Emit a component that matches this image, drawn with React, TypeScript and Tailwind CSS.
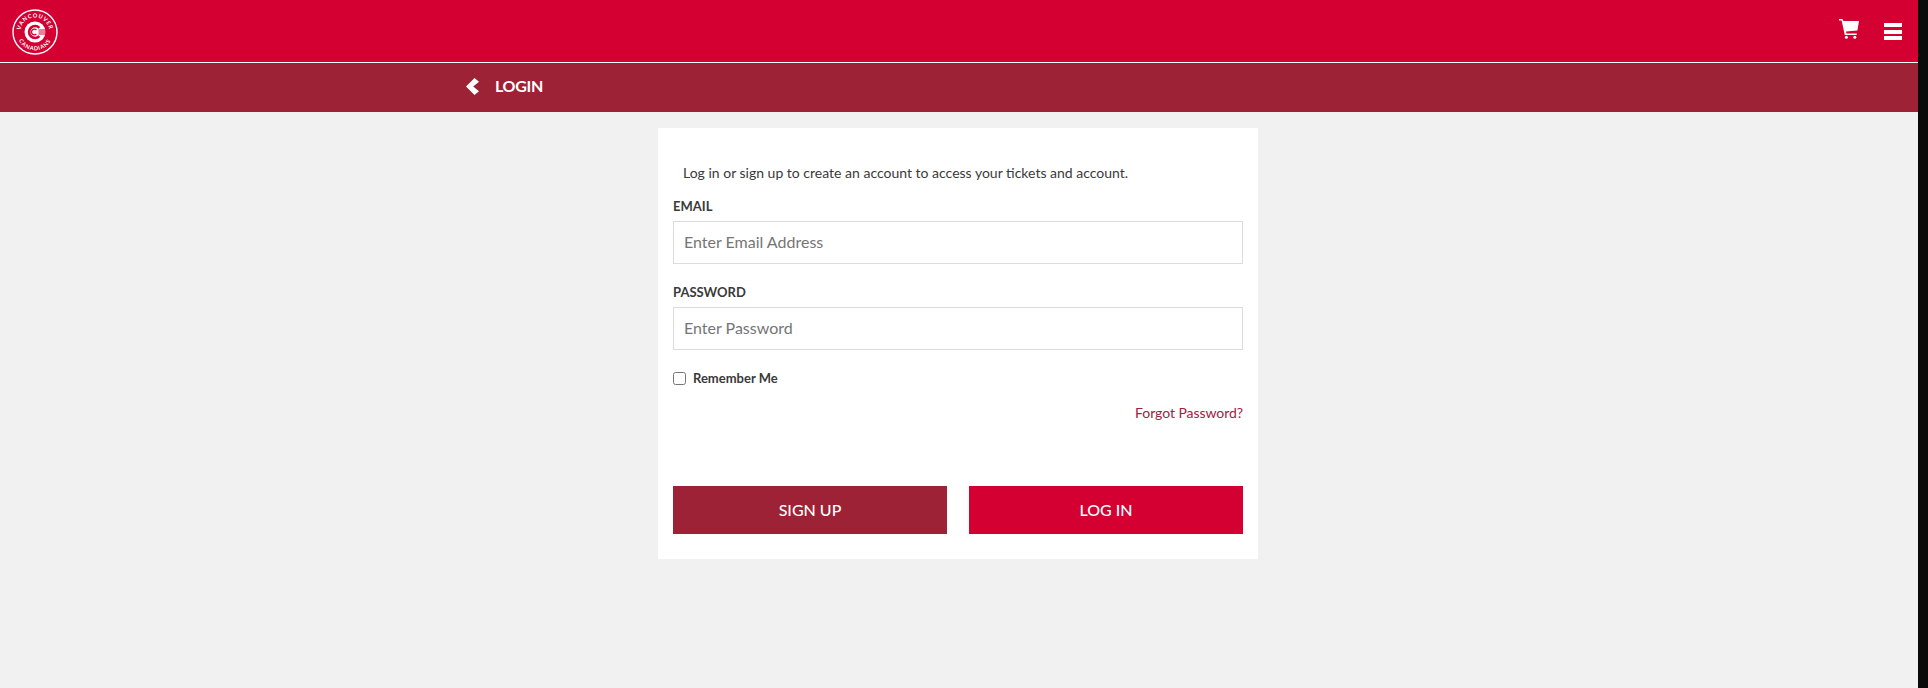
import { useState } from "react"

function Logo() {
    return (
        <svg viewBox="0 0 46 46" className="h-[46px] w-[46px]">
            <circle cx="23" cy="23" r="22" fill="none" stroke="#fff" strokeWidth="1.4" />
            <circle cx="23" cy="23" r="10.5" fill="#fff" />
            <path d="M27.4 18.8a6 6 0 1 0 0 8.4" fill="none" stroke="#d50032" strokeWidth="2.6" />
            <path d="M24.4 21.2a2.8 2.8 0 1 0 0 3.6" fill="none" stroke="#d50032" strokeWidth="1.3" />
            <path d="M26.5 21h7M26.5 23h8M26.5 25h7" stroke="#d50032" strokeWidth="1" />
            <defs>
                <path id="logo-top" d="M8.5 23a14.5 14.5 0 0 1 29 0" />
                <path id="logo-bottom" d="M5.2 26a18 18 0 0 0 35.6 0" />
            </defs>
            <text fill="#fff" fontSize="5.6" fontWeight="700" fontFamily="Lato, sans-serif" letterSpacing="0.7">
                <textPath href="#logo-top" startOffset="50%" textAnchor="middle">VANCOUVER</textPath>
            </text>
            <text fill="#fff" fontSize="5.6" fontWeight="700" fontFamily="Lato, sans-serif" letterSpacing="0.7">
                <textPath href="#logo-bottom" startOffset="50%" textAnchor="middle">CANADIANS</textPath>
            </text>
        </svg>
    )
}

function CartIcon() {
    return (
        <svg viewBox="0 0 20 20" className="h-[20px] w-[20px]" fill="#fff">
            <path d="M0 0h3.4l1 2H20l-1.6 9.4-11.4 1 .4 2h10.4V16H5.8L2.6 1.6H0z" />
            <circle cx="7.4" cy="18.3" r="1.5" />
            <circle cx="15.8" cy="18.3" r="1.5" />
        </svg>
    )
}

function BackIcon() {
    return (
        <svg viewBox="0 0 13 17" className="h-[17px] w-[13px]" fill="#fff">
            <path d="M8.5 0L13 3.8 7.2 8.5 13 13.2 8.5 17 0 8.5z" />
        </svg>
    )
}

export default function App() {
    const [remember, setRemember] = useState(false)

    return (
        <div className="flex h-[688px] overflow-hidden bg-[#0a0a0a] font-['Lato',sans-serif]">
            <div className="w-[1918px] shrink-0 bg-[#f1f1f1]">
                <header className="flex h-[63px] items-start justify-between border-b border-white bg-[#d50032] pl-[12px] pr-[16px]">
                    <div className="pt-[9px]">
                        <Logo />
                    </div>
                    <div className="flex items-start gap-[25px] pt-[19px]">
                        <CartIcon />
                        <div className="mt-[4px] flex w-[18px] flex-col gap-[2.5px]">
                            <span className="h-[4px] bg-white" />
                            <span className="h-[4px] bg-white" />
                            <span className="h-[4px] bg-white" />
                        </div>
                    </div>
                </header>

                <div className="h-[49px] bg-[#9d2235]">
                    <div className="flex h-full items-center pb-[3px] pl-[466px]">
                        <BackIcon />
                        <span className="ml-[16px] text-[16px] font-bold tracking-[-0.3px] text-white">LOGIN</span>
                    </div>
                </div>

                <main className="ml-[658px] mt-[16px] h-[431px] w-[600px] bg-white px-[15px] pt-[35px]">
                    <p className="pl-[10px] text-[14px] leading-[20px] text-[#3a3a3a]">
                        Log in or sign up to create an account to access your tickets and account.
                    </p>

                    <label className="mt-[13px] block text-[13px] font-bold leading-[20px] text-[#3a3a3a]">EMAIL</label>
                    <input
                        type="text"
                        placeholder="Enter Email Address"
                        className="mt-[5px] block h-[43px] w-full border border-[#dcdcdc] px-[10px] pb-[2px] text-[16px] text-[#3a3a3a] outline-none placeholder:text-[#757575]"
                    />

                    <label className="mt-[18px] block text-[13px] font-bold leading-[20px] text-[#3a3a3a]">PASSWORD</label>
                    <input
                        type="password"
                        placeholder="Enter Password"
                        className="mt-[5px] block h-[43px] w-full border border-[#dcdcdc] px-[10px] pb-[2px] text-[16px] text-[#3a3a3a] outline-none placeholder:text-[#757575]"
                    />

                    <label className="mt-[18px] flex items-center gap-[7px] text-[13px] font-bold leading-[20px] text-[#3a3a3a]">
                        <input
                            type="checkbox"
                            checked={remember}
                            onChange={(e) => setRemember(e.target.checked)}
                            className="m-0 h-[13px] w-[13px]"
                        />
                        Remember Me
                    </label>

                    <div className="mt-[15px] text-right text-[14px] leading-[20px] tracking-[-0.05px] text-[#a3213f]">
                        <a href="#">Forgot Password?</a>
                    </div>

                    <div className="mt-[63px] flex justify-between">
                        <button className="h-[48px] w-[274px] bg-[#9d2235] text-[16px] font-medium text-white">SIGN UP</button>
                        <button className="h-[48px] w-[274px] bg-[#d50032] text-[16px] font-medium text-white">LOG IN</button>
                    </div>
                </main>
            </div>
            <div className="flex-1" />
        </div>
    )
}
